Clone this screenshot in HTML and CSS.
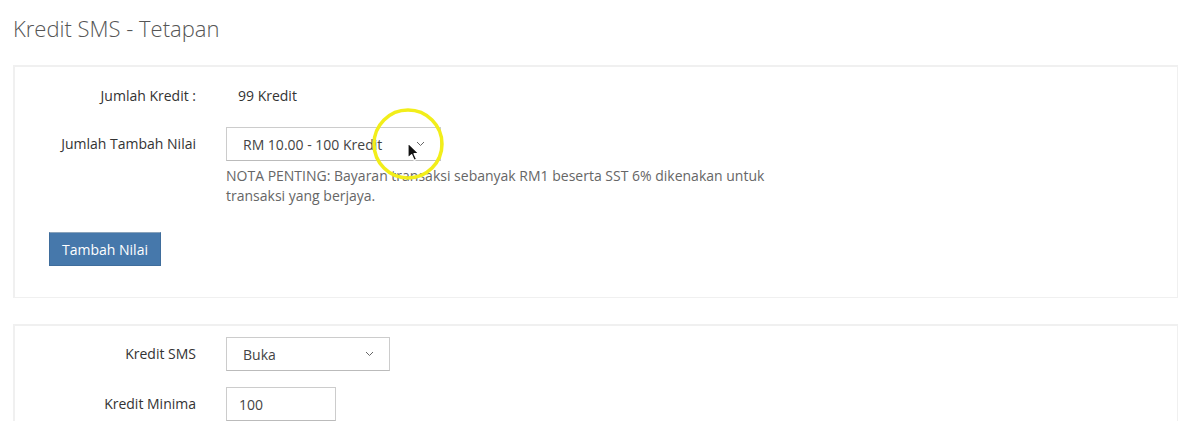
FILE: index.html
```html
<!DOCTYPE html>
<html lang="ms">
<head>
    <meta charset="UTF-8">
    <meta name="viewport" content="width=device-width, initial-scale=1.0">
    <title>Kredit SMS - Tetapan</title>
    <link rel="stylesheet" href="styles.css">
</head>
<body>
    <h1 class="page-title">Kredit SMS - Tetapan</h1>

    <div class="panel panel-topup">
        <div class="form-row row-balance">
            <div class="form-label">Jumlah Kredit :</div>
            <div class="form-value">99 Kredit</div>
        </div>
        <div class="form-row row-amount">
            <div class="form-label">Jumlah Tambah Nilai</div>
            <div class="form-value">
                <div class="select-wrap select-amount">
                    <select class="form-select">
                        <option>RM 10.00 - 100 Kredit</option>
                        <option>RM 20.00 - 200 Kredit</option>
                        <option>RM 50.00 - 500 Kredit</option>
                    </select>
                    <svg class="chevron" width="9" height="6" viewBox="0 0 9 6"><path d="M1 1l3.5 3.5L8 1" fill="none" stroke="#666" stroke-width="1"/></svg>
                </div>
                <p class="note">NOTA PENTING: Bayaran transaksi sebanyak RM1 beserta SST 6% dikenakan untuk transaksi yang berjaya.</p>
            </div>
        </div>
        <button class="btn-primary">Tambah Nilai</button>
    </div>

    <div class="panel panel-settings">
        <div class="form-row">
            <div class="form-label">Kredit SMS</div>
            <div class="form-value">
                <div class="select-wrap select-status">
                    <select class="form-select">
                        <option>Buka</option>
                        <option>Tutup</option>
                    </select>
                    <svg class="chevron" width="9" height="6" viewBox="0 0 9 6"><path d="M1 1l3.5 3.5L8 1" fill="none" stroke="#666" stroke-width="1"/></svg>
                </div>
            </div>
        </div>
        <div class="form-row row-min">
            <div class="form-label">Kredit Minima</div>
            <div class="form-value">
                <input class="form-input" type="text" value="100">
            </div>
        </div>
    </div>

    <!-- click highlight from the screen recording -->
    <div class="click-mark">
        <svg width="80" height="80" viewBox="0 0 80 80">
            <circle cx="38" cy="36" r="34" fill="none" stroke="#f2ee1a" stroke-width="3.5"/>
        </svg>
        <svg class="cursor" width="14" height="20" viewBox="0 0 14 20">
            <path d="M1 1v15l3.6-3.4 2.6 5.8 2.4-1.1-2.6-5.6H12z" fill="#111" stroke="#fff" stroke-width="1.2" stroke-linejoin="round"/>
        </svg>
    </div>
</body>
</html>
```

FILE: styles.css
```css
body {
  margin: 0;
  padding: 0 14px 0 13px;
  font-family: "Open Sans", "Noto Sans", sans-serif;
  font-size: 14px;
  color: #333;
  background: #fff;
}

.page-title {
  margin: 0;
  padding-top: 14px;
  height: 65px;
  box-sizing: border-box;
  font-size: 22px;
  font-weight: 300;
  color: #555;
  line-height: 28px;
}

.panel {
  border: 2px solid #f0f0f0;
  border-right-width: 1px;
  border-bottom-width: 1px;
}

.panel-topup {
  padding: 19px 0 31px 0;
}

.panel-settings {
  margin-top: 26px;
  padding: 11px 0 0 0;
  border-bottom: none;
}

.form-row {
  display: flex;
  align-items: flex-start;
  gap: 30px;
}

.form-label {
  width: 181px;
  flex-shrink: 0;
  text-align: right;
  line-height: 20px;
  padding-top: 7px;
}

.row-balance .form-label,
.row-balance .form-value {
  padding-top: 0;
  line-height: 20px;
}

.row-balance .form-value {
  padding-left: 12px;
}

.row-amount {
  margin-top: 21px;
}

.row-min {
  margin-top: 16px;
}

.select-wrap {
  position: relative;
}

.select-amount {
  width: 215px;
}

.select-status {
  width: 164px;
}

.form-select,
.form-input {
  display: block;
  box-sizing: border-box;
  height: 34px;
  width: 100%;
  padding: 0 16px;
  border: 1px solid #ccc;
  border-bottom-color: #bbb;
  border-radius: 0;
  background: #fff;
  font-family: inherit;
  font-size: 14px;
  color: #444;
  -webkit-appearance: none;
  appearance: none;
  outline: none;
}

.form-input {
  width: 110px;
  padding: 0 12px;
}

.chevron {
  position: absolute;
  right: 16px;
  top: 14px;
  pointer-events: none;
}

.note {
  margin: 5px 0 0 0;
  width: 560px;
  line-height: 20px;
  color: #666;
}

.btn-primary {
  display: block;
  margin: 26px 0 0 34px;
  height: 34px;
  padding: 0 12px;
  background: #4678ab;
  border: 1px solid #3f6d9c;
  border-top-color: #8aa3bb;
  color: #fff;
  font-family: inherit;
  font-size: 14px;
  cursor: pointer;
}

.click-mark {
  position: absolute;
  left: 370px;
  top: 108px;
  width: 80px;
  height: 80px;
  pointer-events: none;
}

.click-mark .cursor {
  position: absolute;
  left: 37px;
  top: 34px;
}
```
